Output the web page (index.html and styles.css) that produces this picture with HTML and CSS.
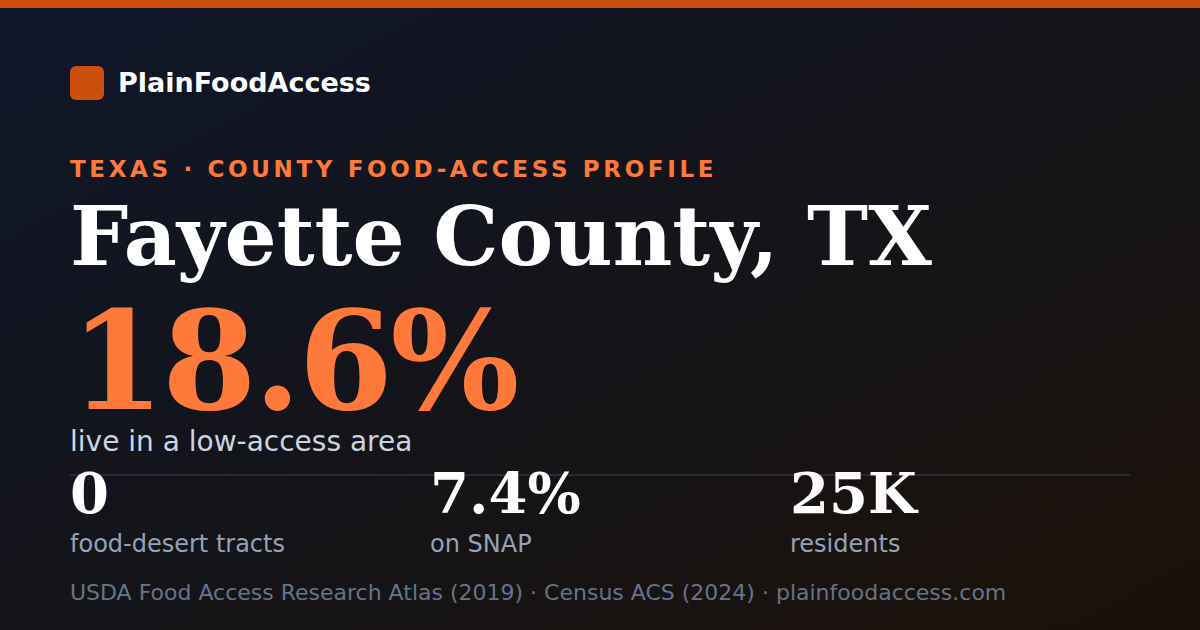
FILE: index.html
```html
<!DOCTYPE html>
<html lang="en">
<head>
<meta charset="utf-8">
<title>Fayette County, TX — PlainFoodAccess</title>
<link rel="stylesheet" href="styles.css">
</head>
<body>
<div class="card">
  <div class="topbar"></div>
  <div class="content">
    <div class="brand">
      <div class="brand-mark"></div>
      <div class="brand-name">PlainFoodAccess</div>
    </div>
    <div class="eyebrow">TEXAS · COUNTY FOOD-ACCESS PROFILE</div>
    <h1 class="title">Fayette County, TX</h1>
    <div class="hero-num">18.6%</div>
    <div class="hero-label">live in a low-access area</div>
    <div class="stats">
      <div class="stat">
        <div class="stat-num">0</div>
        <div class="stat-label">food-desert tracts</div>
      </div>
      <div class="stat">
        <div class="stat-num">7.4%</div>
        <div class="stat-label">on SNAP</div>
      </div>
      <div class="stat">
        <div class="stat-num">25K</div>
        <div class="stat-label">residents</div>
      </div>
    </div>
    <div class="footer">USDA Food Access Research Atlas (2019) · Census ACS (2024) · plainfoodaccess.com</div>
  </div>
</div>
</body>
</html>
```

FILE: styles.css
```css
html, body {
  margin: 0;
  padding: 0;
}
body {
  width: 1200px;
  height: 630px;
  overflow: hidden;
  font-family: "DejaVu Sans", "Noto Sans", sans-serif;
}
.card {
  width: 1200px;
  height: 630px;
  background: linear-gradient(152deg, #0f172a 0%, #141419 50%, #1c1108 100%);
  display: flex;
  flex-direction: column;
}
.topbar {
  height: 8px;
  background: #cc4f0e;
}
.content {
  padding: 58px 70px 0 70px;
  display: flex;
  flex-direction: column;
}
.brand {
  display: flex;
  align-items: center;
  gap: 14px;
  height: 34px;
}
.brand-mark {
  width: 34px;
  height: 34px;
  border-radius: 6px;
  background: #cc4f0e;
}
.brand-name {
  color: #ffffff;
  font-weight: bold;
  font-size: 27px;
  line-height: 34px;
}
.eyebrow {
  margin-top: 55px;
  color: #ff7a3a;
  font-weight: bold;
  font-size: 23px;
  letter-spacing: 3.65px;
  line-height: 28px;
}
.title {
  margin: 8px 0 0 0;
  font-family: "DejaVu Serif", "Liberation Serif", serif;
  font-weight: bold;
  font-size: 82px;
  line-height: 90px;
  color: #ffffff;
}
.hero-num {
  margin-top: 21px;
  font-family: "DejaVu Serif", "Liberation Serif", serif;
  font-weight: bold;
  font-size: 136px;
  line-height: 118px;
  letter-spacing: -0.02em;
  color: #ff7a3a;
}
.hero-label {
  margin-top: 6px;
  color: #cbd5e1;
  font-size: 28px;
  line-height: 32px;
}
.stats {
  display: grid;
  grid-template-columns: 360px 360px 340px;
  border-top: 2px solid #262a35;
  margin-top: 16px;
}
.stat-num {
  font-family: "DejaVu Serif", "Liberation Serif", serif;
  font-weight: bold;
  font-size: 56px;
  line-height: 34px;
  color: #ffffff;
}
.stat-label {
  color: #94a3b8;
  font-size: 24px;
  line-height: 30px;
  margin-top: 19px;
}
.footer {
  margin-top: 20px;
  color: #64748b;
  font-size: 22px;
  line-height: 28px;
}
```
